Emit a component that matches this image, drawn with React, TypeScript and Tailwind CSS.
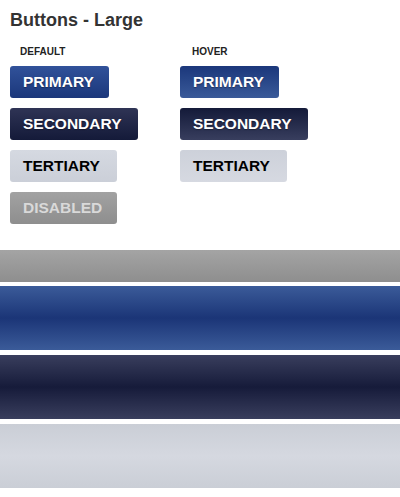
const font = { fontFamily: '"Liberation Sans", Arial, sans-serif' };

type Kind = 'primary' | 'secondary' | 'tertiary' | 'disabled';

const buttonStyles: Record<Kind, { normal: string; hover: string; width: string }> = {
  primary: {
    normal: 'bg-gradient-to-b from-[#31529a] to-[#1b377b] text-white',
    hover: 'bg-gradient-to-b from-[#1b377b] to-[#3a5a99] text-white',
    width: 'w-[99px]',
  },
  secondary: {
    normal: 'bg-gradient-to-b from-[#2f3455] to-[#141a39] text-white',
    hover: 'bg-gradient-to-b from-[#141a39] to-[#383e5e] text-white',
    width: 'w-[128px]',
  },
  tertiary: {
    normal: 'bg-gradient-to-b from-[#d5d9e1] to-[#cbcfd8] text-black',
    hover: 'bg-gradient-to-b from-[#cdd1da] to-[#d6d9e1] text-black',
    width: 'w-[107px]',
  },
  disabled: {
    normal: 'bg-gradient-to-b from-[#a2a2a2] to-[#8e8e8e] text-[#d9d9d9]',
    hover: 'bg-gradient-to-b from-[#a2a2a2] to-[#8e8e8e] text-[#d9d9d9]',
    width: 'w-[107px]',
  },
};

function Btn({ kind, hover, label }: { kind: Kind; hover?: boolean; label: string }) {
  const s = buttonStyles[kind];
  const dark = kind === 'primary' || kind === 'secondary';
  return (
    <div
      className={`${s.width} ${hover ? s.hover : s.normal} h-[32px] rounded-[3px] flex items-center pl-[13px] text-[15.5px] font-bold leading-none ${dark ? '[text-shadow:0_1px_1px_rgba(0,0,0,0.35)]' : ''}`}
    >
      {label}
    </div>
  );
}

export default function App() {
  return (
    <div className="w-[400px] h-[497px] bg-white overflow-hidden" style={font}>
      {/* Title */}
      <div className="pt-[11px] pl-[10px] text-[18px] leading-[18px] font-bold text-[#333333]">
        Buttons - Large
      </div>

      {/* Button grid */}
      <div className="grid grid-cols-[170px_170px] pl-[10px] mt-[18px]">
        <div className="flex flex-col">
          <div className="pl-[10px] text-[10px] leading-[10px] font-bold text-[#222222]">DEFAULT</div>
          <div className="flex flex-col gap-[10px] mt-[9px]">
            <Btn kind="primary" label="PRIMARY" />
            <Btn kind="secondary" label="SECONDARY" />
            <Btn kind="tertiary" label="TERTIARY" />
            <Btn kind="disabled" label="DISABLED" />
          </div>
        </div>
        <div className="flex flex-col">
          <div className="pl-[12px] text-[10px] leading-[10px] font-bold text-[#222222]">HOVER</div>
          <div className="flex flex-col gap-[10px] mt-[9px]">
            <Btn kind="primary" hover label="PRIMARY" />
            <Btn kind="secondary" hover label="SECONDARY" />
            <Btn kind="tertiary" hover label="TERTIARY" />
          </div>
        </div>
      </div>

      {/* Background swatches */}
      <div className="mt-[26px] flex flex-col">
        <div className="h-[32px] bg-gradient-to-b from-[#a4a4a4] to-[#8e8e8e]" />
        <div className="h-[64px] mt-[4px] bg-[linear-gradient(to_bottom,#3b5b99_0%,#1b3577_50%,#3b5b99_100%)]" />
        <div className="h-[64px] mt-[5px] bg-[linear-gradient(to_bottom,#393e5d_0%,#161b3a_50%,#393e5d_100%)]" />
        <div className="h-[64px] mt-[5px] bg-[linear-gradient(to_bottom,#caced6_0%,#d5d8e0_50%,#caced6_100%)]" />
      </div>
    </div>
  );
}
